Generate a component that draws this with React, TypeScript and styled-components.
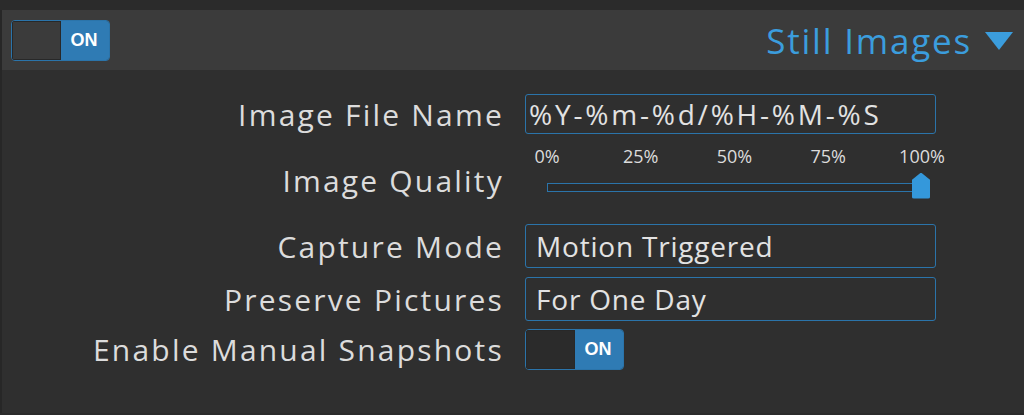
import styled, { createGlobalStyle } from 'styled-components';

const GlobalStyle = createGlobalStyle`
  html, body {
    margin: 0;
    padding: 0;
    background: #2b2b2b;
    font-family: 'Open Sans', 'Noto Sans', sans-serif;
  }
  * {
    box-sizing: border-box;
  }
`;

const Page = styled.div`
  width: 1024px;
  height: 415px;
  padding-top: 10px;
  background: #2b2b2b;
  overflow: hidden;
`;

const Section = styled.section`
  height: 403px;
  border-left: 2px solid #272727;
  background: #2f2f2f;
  display: flex;
  flex-direction: column;
`;

const Header = styled.div`
  height: 60px;
  background: #3b3b3b;
  display: flex;
  align-items: center;
  justify-content: space-between;
  padding: 0 11px 0 9px;
`;

const Title = styled.div`
  display: flex;
  align-items: center;
  gap: 13px;
  color: #3b9ddd;
  font-size: 35px;
  letter-spacing: 1.8px;
`;

const Caret = styled.span`
  width: 0;
  height: 0;
  border-left: 14px solid transparent;
  border-right: 14px solid transparent;
  border-top: 18px solid #3b9ddd;
  margin-top: 2px;
`;

const Body = styled.div`
  display: grid;
  grid-template-columns: 500px 411px;
  column-gap: 23px;
  padding-top: 24px;
  align-items: start;
`;

const Label = styled.div<{ $h: number; $gap?: number; $top?: number }>`
  height: ${(p) => p.$h}px;
  margin-top: ${(p) => p.$gap ?? 0}px;
  margin-right: -2px;
  padding-top: ${(p) => p.$top ?? 0}px;
  display: flex;
  align-items: ${(p) => (p.$top ? 'flex-start' : 'center')};
  justify-content: flex-end;
  color: #dcdcdc;
  font-size: 30px;
  line-height: 41px;
  letter-spacing: 2.2px;
  white-space: nowrap;
`;

const Cell = styled.div<{ $h: number; $gap?: number }>`
  height: ${(p) => p.$h}px;
  margin-top: ${(p) => p.$gap ?? 0}px;
  display: flex;
  align-items: center;
`;

const Field = styled.div<{ $pad: number; $ls: number }>`
  width: 411px;
  height: 100%;
  border: 1.5px solid #2b74aa;
  border-radius: 3px;
  display: flex;
  align-items: center;
  padding-left: ${(p) => p.$pad}px;
  color: #e2e2e2;
  font-size: 28px;
  letter-spacing: ${(p) => p.$ls}px;
  white-space: nowrap;
`;

const SliderWrap = styled.div`
  width: 423px;
  flex-shrink: 0;
  margin-left: -2px;
  display: flex;
  flex-direction: column;
  align-self: flex-start;
  padding-top: 12px;
`;

const Ticks = styled.div`
  display: flex;
  justify-content: space-between;
`;

const Tick = styled.span`
  width: 48px;
  white-space: nowrap;
  color: #dcdcdc;
  font-size: 18px;
  line-height: 20px;
  display: flex;
  justify-content: center;
`;

const Track = styled.div`
  position: relative;
  margin: 17px 24px 0 24px;
  height: 9px;
  border: 1.5px solid #2b74aa;
  background: #2a2a2a;
`;

const Handle = styled.div`
  position: absolute;
  top: -11.5px;
  width: 18px;
  height: 26px;
  margin-left: -9px;
  background: #3498db;
  border-radius: 0 0 2px 2px;
  clip-path: polygon(50% 0, 100% 28%, 100% 100%, 0 100%, 0 28%);
`;

const Toggle = styled.div<{ $knob: string }>`
  width: 99px;
  height: 41px;
  border: 1.5px solid #2b74aa;
  border-radius: 4px;
  display: flex;
  overflow: hidden;

  span:first-child {
    width: 49px;
    background: ${(p) => p.$knob};
    border: 1px solid #282828;
  }
`;

const ToggleOn = styled.span`
  flex: 1;
  background: #2f7bb4;
  color: #ffffff;
  font-family: 'Liberation Sans', Arial, sans-serif;
  font-weight: 700;
  font-size: 18px;
  display: flex;
  align-items: center;
  justify-content: center;
  padding-right: 2px;
`;

const Switch = ({ knob }: { knob: string }) => (
  <Toggle $knob={knob}>
    <span />
    <ToggleOn>ON</ToggleOn>
  </Toggle>
);

const ticks = ['0%', '25%', '50%', '75%', '100%'];
const quality = 100;

export default function App() {
  return (
    <>
      <GlobalStyle />
      <Page>
        <Section>
          <Header>
            <Switch knob="#3b3b3b" />
            <Title>
              Still Images
              <Caret />
            </Title>
          </Header>
          <Body>
            <Label $h={40}>Image File Name</Label>
            <Cell $h={40}>
              <Field $pad={3} $ls={2.8}>%Y-%m-%d/%H-%M-%S</Field>
            </Cell>

            <Label $h={82} $top={26}>Image Quality</Label>
            <Cell $h={82}>
              <SliderWrap>
                <Ticks>
                  {ticks.map((t) => (
                    <Tick key={t}>{t}</Tick>
                  ))}
                </Ticks>
                <Track>
                  <Handle style={{ left: `${quality}%` }} />
                </Track>
              </SliderWrap>
            </Cell>

            <Label $h={44} $gap={8}>Capture Mode</Label>
            <Cell $h={44} $gap={8}>
              <Field $pad={10} $ls={0.8}>Motion Triggered</Field>
            </Cell>

            <Label $h={44} $gap={9}>Preserve Pictures</Label>
            <Cell $h={44} $gap={9}>
              <Field $pad={10} $ls={0.8}>For One Day</Field>
            </Cell>

            <Label $h={41} $gap={8}>Enable Manual Snapshots</Label>
            <Cell $h={41} $gap={8}>
              <Switch knob="#2b2b2b" />
            </Cell>
          </Body>
        </Section>
      </Page>
    </>
  );
}
